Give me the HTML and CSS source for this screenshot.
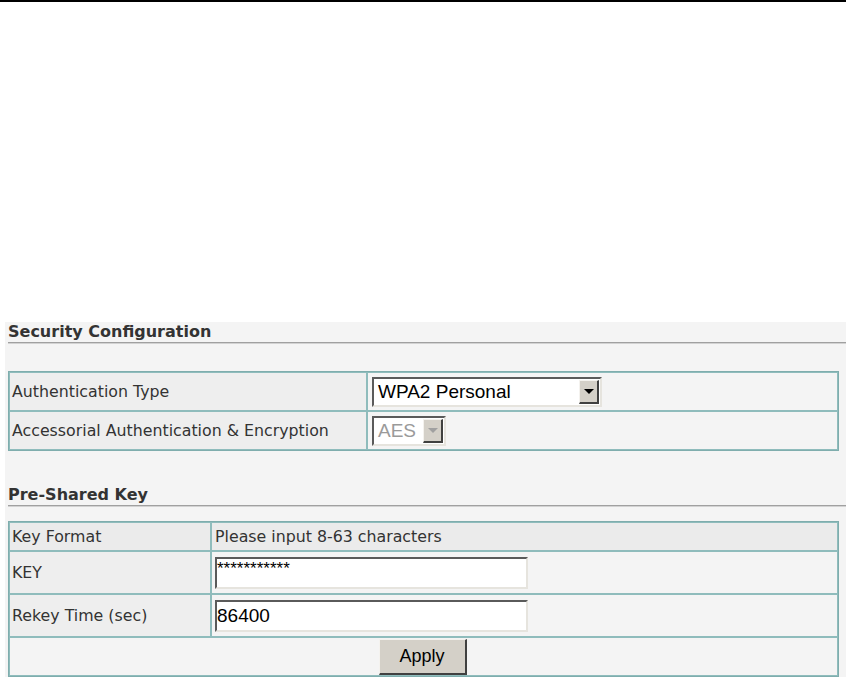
FILE: index.html
```html
<!DOCTYPE html>
<html>
<head>
<meta charset="utf-8">
<title>Security Configuration</title>
<link rel="stylesheet" href="styles.css">
</head>
<body>
<div class="topline"></div>
<main class="panel">
  <h2 class="section-title first">Security Configuration</h2>
  <table class="grid grid-security">
    <colgroup><col class="col-wide"><col></colgroup>
    <tr>
      <td class="label">Authentication Type</td>
      <td class="value">
        <div class="select select-auth">
          <span class="select-text">WPA2 Personal</span>
          <span class="select-btn"><span class="tri"></span></span>
        </div>
      </td>
    </tr>
    <tr>
      <td class="label">Accessorial Authentication &amp; Encryption</td>
      <td class="value">
        <div class="select select-aes disabled">
          <span class="select-text">AES</span>
          <span class="select-btn"><span class="tri"></span></span>
        </div>
      </td>
    </tr>
  </table>

  <h2 class="section-title second">Pre-Shared Key</h2>
  <table class="grid grid-psk">
    <colgroup><col class="col-narrow"><col></colgroup>
    <tr class="row-head">
      <td class="label">Key Format</td>
      <td class="value">Please input 8-63 characters</td>
    </tr>
    <tr class="row-tall">
      <td class="label">KEY</td>
      <td class="value"><input class="field field-key" type="text" value="***********"></td>
    </tr>
    <tr class="row-tall">
      <td class="label">Rekey Time (sec)</td>
      <td class="value"><input class="field" type="text" value="86400"></td>
    </tr>
    <tr class="row-last">
      <td class="action" colspan="2"><button class="btn" type="button">Apply</button></td>
    </tr>
  </table>
</main>
</body>
</html>
```

FILE: styles.css
```css
html, body {
  margin: 0;
  padding: 0;
  background: #ffffff;
}

body {
  font-family: "DejaVu Sans", Verdana, sans-serif;
  font-size: 15.8px;
  color: #333333;
  height: 680px;
  overflow: hidden;
}

.topline {
  height: 2px;
  background: #000000;
}

.panel {
  margin: 320px 0 0 5px;
  padding: 0 0 0 3px;
  background: #f4f4f4;
}

.section-title {
  margin: 0;
  padding: 0;
  font-size: 16px;
  line-height: 20px;
  font-weight: bold;
  color: #333333;
  border-bottom: 1px solid #a0a0a0;
  box-shadow: 0 1px 0 #d2d2d2;
}

.section-title.second {
  margin-top: 34px;
}

.grid {
  width: calc(100% - 7px);
  table-layout: fixed;
  border-collapse: separate;
  border-spacing: 0;
  border: 1px solid #7fadad;
  background: #f4f4f4;
}

.col-wide {
  width: 358px;
}

.col-narrow {
  width: 202px;
}

.grid-security {
  margin-top: 28px;
}

.grid-psk {
  margin-top: 15px;
}

.grid td {
  border: 1px solid #8fbcbc;
  padding: 0 4px 0 2px;
  vertical-align: middle;
  color: #333333;
  white-space: nowrap;
}

.grid td.value {
  padding-left: 4px;
}

.grid-psk td.value {
  padding-left: 3px;
}

.grid-security td {
  height: 37px;
}

.label {
  background: #eeeeee;
}

.row-head td {
  background: #ebebeb;
  height: 27px;
}

.row-tall td {
  height: 41px;
}

.row-last td {
  height: 37px;
}

.select {
  display: flex;
  box-sizing: border-box;
  height: 30px;
  border-style: solid;
  border-width: 2px;
  border-color: #5a5a5a #e6e4de #e6e4de #5a5a5a;
  background: #ffffff;
  font-family: "Liberation Sans", Arial, sans-serif;
  font-size: 19px;
  color: #000000;
}

.select-auth {
  width: 230px;
}

.select-aes {
  width: 74px;
}

.select-text {
  flex: 1;
  padding-left: 4px;
  line-height: 26px;
}

.select-btn {
  width: 20px;
  margin: 1px;
  box-sizing: border-box;
  background: #d4d0c8;
  border-style: solid;
  border-width: 1px 2px 2px 1px;
  border-color: #f4f2ee #404040 #404040 #f4f2ee;
  display: flex;
  align-items: center;
  justify-content: center;
}

.tri {
  width: 0;
  height: 0;
  border-left: 5px solid transparent;
  border-right: 5px solid transparent;
  border-top: 5px solid #000000;
}

.disabled .select-text {
  color: #9a9a9a;
}

.disabled .tri {
  border-top-color: #a0a0a0;
}

.field {
  display: block;
  box-sizing: border-box;
  width: 313px;
  height: 32px;
  margin: 0;
  padding: 0;
  border-style: solid;
  border-width: 2px;
  border-color: #5a5a5a #e6e4de #e6e4de #5a5a5a;
  background: #ffffff;
  font-family: "Liberation Sans", Arial, sans-serif;
  font-size: 19px;
  color: #000000;
  outline: none;
}

.field-key {
  font-size: 17px;
  padding-bottom: 8px;
}

.action {
  text-align: center;
}

.btn {
  width: 88px;
  height: 36px;
  box-sizing: border-box;
  background: #d4d0c8;
  border-style: solid;
  border-width: 1px 2px 2px 1px;
  border-color: #f4f2ee #404040 #404040 #f4f2ee;
  font-family: "Liberation Sans", Arial, sans-serif;
  font-size: 18px;
  color: #000000;
  padding: 0;
}
```
